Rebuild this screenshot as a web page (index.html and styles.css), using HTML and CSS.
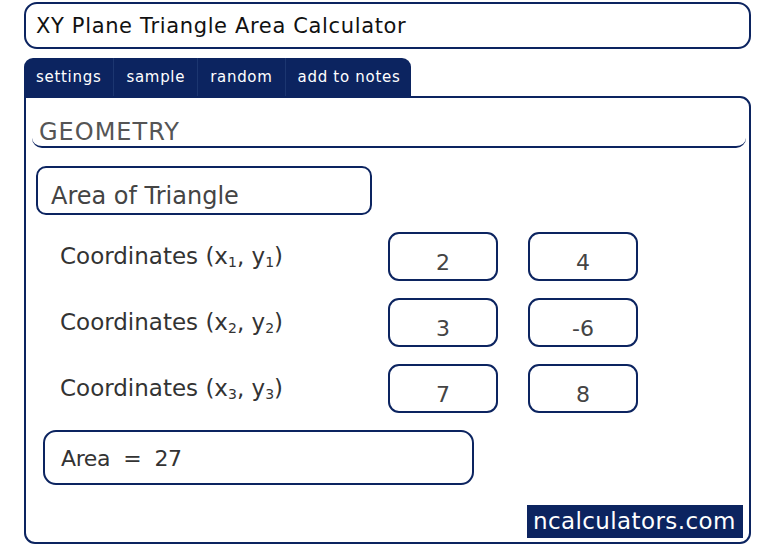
FILE: index.html
```html
<!DOCTYPE html>
<html>
<head>
<meta charset="utf-8">
<link rel="stylesheet" href="styles.css">
</head>
<body>
<div class="wrap">
  <div class="title">XY Plane Triangle Area Calculator</div>
  <div class="tabs">
    <span class="tab">settings</span>
    <span class="tab">sample</span>
    <span class="tab">random</span>
    <span class="tab">add to notes</span>
  </div>
  <div class="panel">
    <div class="category">GEOMETRY</div>
    <div class="calc-name">Area of Triangle</div>
    <div class="rows">
      <div class="row">
        <div class="label">Coordinates (x<sub>1</sub>, y<sub>1</sub>)</div>
        <div class="input">2</div>
        <div class="input">4</div>
      </div>
      <div class="row">
        <div class="label">Coordinates (x<sub>2</sub>, y<sub>2</sub>)</div>
        <div class="input">3</div>
        <div class="input">-6</div>
      </div>
      <div class="row">
        <div class="label">Coordinates (x<sub>3</sub>, y<sub>3</sub>)</div>
        <div class="input">7</div>
        <div class="input">8</div>
      </div>
    </div>
    <div class="result">Area&nbsp; = &nbsp;27</div>
    <div class="footer"><span class="brand">ncalculators.com</span></div>
  </div>
</div>
</body>
</html>
```
FILE: styles.css
```css
* { box-sizing: border-box; }
body {
  margin: 0;
  background: #fff;
  font-family: "DejaVu Sans", "Open Sans", sans-serif;
  color: #333;
}
.wrap {
  width: 727px;
  margin-left: 24px;
  padding-top: 2px;
}
.title {
  height: 47px;
  border: 2px solid #0c2460;
  border-radius: 13px;
  padding: 0 0 0 10px;
  font-size: 21px;
  line-height: 45px;
  color: #111;
  letter-spacing: 0.65px;
}
.tabs {
  margin-top: 9px;
  display: inline-flex;
  background: #0c2460;
  border-radius: 9px 9px 0 0;
  height: 38px;
  align-items: center;
}
.tab {
  color: #fff;
  font-size: 15px;
  padding: 0 12px;
  line-height: 38px;
  border-right: 1px solid #1c3670;
  letter-spacing: 0.7px;
}
.tab:first-child { padding-left: 12px; }
.tab:last-child { border-right: none; padding-right: 11px; }
.panel {
  height: 448px;
  border: 2px solid #0c2460;
  border-radius: 0 11px 11px 11px;
  padding: 20px 4px 0 4px;
  display: flex;
  flex-direction: column;
}
.category {
  font-size: 24px;
  color: #555;
  padding-left: 7px;
  height: 30px;
  line-height: 28px;
  border-bottom: 2px solid #0c2460;
  border-radius: 0 0 10px 10px;
  margin-left: 2px;
  margin-right: -1px;
  letter-spacing: 1px;
}
.calc-name {
  margin-top: 18px;
  margin-left: 6px;
  width: 336px;
  height: 49px;
  border: 2px solid #0c2460;
  border-radius: 10px;
  font-size: 24px;
  color: #444;
  padding: 14px 0 0 13px;
  line-height: 28px;
}
.rows {
  margin-top: 17px;
  display: flex;
  flex-direction: column;
  gap: 17px;
}
.row {
  display: flex;
  align-items: center;
  height: 49px;
}
.label {
  width: 358px;
  padding-left: 30px;
  font-size: 23px;
  color: #333;
  margin-top: -2px;
}
.label sub {
  font-size: 14px;
  vertical-align: -3px;
  line-height: 0;
}
.input {
  width: 110px;
  height: 49px;
  border: 2px solid #0c2460;
  border-radius: 11px;
  margin-right: 30px;
  text-align: center;
  font-size: 22px;
  color: #444;
  padding-top: 15px;
  line-height: 28px;
}
.result {
  margin-top: 17px;
  margin-left: 13px;
  width: 431px;
  height: 55px;
  border: 2px solid #0c2460;
  border-radius: 13px;
  font-size: 22px;
  color: #333;
  padding-left: 16px;
  line-height: 53px;
  white-space: pre;
  letter-spacing: -0.4px;
}
.footer {
  margin-top: 20px;
  display: flex;
  justify-content: flex-end;
  padding-right: 2px;
}
.brand {
  background: #0c2460;
  color: #fff;
  font-size: 23px;
  height: 33px;
  line-height: 33px;
  padding: 0 6px 0 6px;
  width: 216px;
  letter-spacing: 0.4px;
  white-space: nowrap;
  overflow: hidden;
}
```
